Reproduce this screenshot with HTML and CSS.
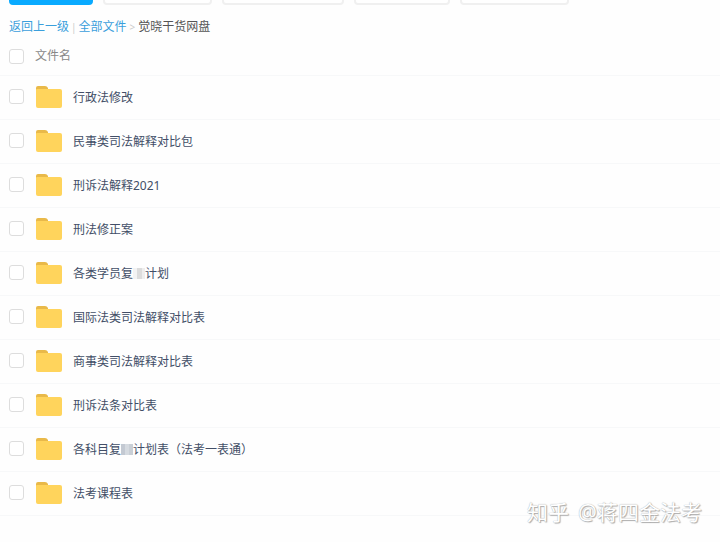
FILE: index.html
```html
<!DOCTYPE html>
<html lang="zh-CN">

<head>
    <meta charset="UTF-8">
    <meta name="viewport" content="width=device-width, initial-scale=1.0">
    <title>觉晓干货网盘</title>
    <link rel="stylesheet" href="styles.css">
</head>

<body>
    <svg class="sprite" aria-hidden="true">
        <symbol id="folder" viewBox="0 0 26 22">
            <path fill="#e9b949" d="M0 10V2Q0 0 2 0H9Q11 0 12 2V10Z" />
            <path fill="#ffd45c" d="M0 4Q0 3 1 3H24Q26 3 26 5V20Q26 22 24 22H2Q0 22 0 20Z" />
        </symbol>
    </svg>

    <div class="toolbar">
        <button class="btn btn-upload" type="button" aria-label="上传"></button>
        <button class="btn btn-folder" type="button" aria-label="新建文件夹"></button>
        <button class="btn btn-offline" type="button" aria-label="离线下载"></button>
        <button class="btn btn-device" type="button" aria-label="设备"></button>
        <button class="btn btn-share" type="button" aria-label="分享"></button>
    </div>

    <nav class="breadcrumb">
        <a href="#">返回上一级</a>
        <span class="bar">|</span>
        <a href="#">全部文件</a>
        <span class="arrow">&gt;</span>
        <span>觉晓干货网盘</span>
    </nav>

    <main>
        <table class="files">
            <thead>
                <tr>
                    <th class="check"><input type="checkbox" aria-label="全选"></th>
                    <th>文件名</th>
                </tr>
            </thead>
            <tbody>
                <tr>
                    <td class="check"><input type="checkbox" id="f1"></td>
                    <td><label class="name" for="f1"><svg class="icon"><use href="#folder" /></svg><span>行政法修改</span></label></td>
                </tr>
                <tr>
                    <td class="check"><input type="checkbox" id="f2"></td>
                    <td><label class="name" for="f2"><svg class="icon"><use href="#folder" /></svg><span>民事类司法解释对比包</span></label></td>
                </tr>
                <tr>
                    <td class="check"><input type="checkbox" id="f3"></td>
                    <td><label class="name" for="f3"><svg class="icon"><use href="#folder" /></svg><span>刑诉法解释2021</span></label></td>
                </tr>
                <tr>
                    <td class="check"><input type="checkbox" id="f4"></td>
                    <td><label class="name" for="f4"><svg class="icon"><use href="#folder" /></svg><span>刑法修正案</span></label></td>
                </tr>
                <tr>
                    <td class="check"><input type="checkbox" id="f5"></td>
                    <td><label class="name" for="f5"><svg class="icon"><use href="#folder" /></svg><span>各类学员复<i class="mask mask-light"></i>计划</span></label></td>
                </tr>
                <tr>
                    <td class="check"><input type="checkbox" id="f6"></td>
                    <td><label class="name" for="f6"><svg class="icon"><use href="#folder" /></svg><span>国际法类司法解释对比表</span></label></td>
                </tr>
                <tr>
                    <td class="check"><input type="checkbox" id="f7"></td>
                    <td><label class="name" for="f7"><svg class="icon"><use href="#folder" /></svg><span>商事类司法解释对比表</span></label></td>
                </tr>
                <tr>
                    <td class="check"><input type="checkbox" id="f8"></td>
                    <td><label class="name" for="f8"><svg class="icon"><use href="#folder" /></svg><span>刑诉法条对比表</span></label></td>
                </tr>
                <tr>
                    <td class="check"><input type="checkbox" id="f9"></td>
                    <td><label class="name" for="f9"><svg class="icon"><use href="#folder" /></svg><span>各科目复<i class="mask"></i>计划表（法考一表通）</span></label></td>
                </tr>
                <tr>
                    <td class="check"><input type="checkbox" id="f10"></td>
                    <td><label class="name" for="f10"><svg class="icon"><use href="#folder" /></svg><span>法考课程表</span></label></td>
                </tr>
            </tbody>
        </table>
    </main>

    <div class="watermark"><span>知乎</span><span>@蒋四金法考</span></div>
</body>

</html>
```
FILE: styles.css
```css
* {
    box-sizing: border-box;
}

body {
    position: relative;
    margin: 0;
    min-height: 100vh;
    background-color: #fefefe;
    color: #424e67;
    font-family: "Noto Sans", "Noto Sans CJK SC", sans-serif;
    font-size: 12px;
    line-height: 20px;
}

.sprite {
    display: none;
}

/* only the lower edge of the buttons shows */
.toolbar {
    display: flex;
    align-items: flex-end;
    gap: 10px;
    height: 5px;
    padding: 0 9px;
    overflow: hidden;
}

.btn {
    flex: none;
    height: 28px;
    padding: 0;
    border: 2px solid #f0f0f0;
    border-radius: 4px;
    background-color: white;
    cursor: pointer;
}

.btn-upload {
    width: 84px;
    border-color: #09aaff;
    background-color: #09aaff;
}

.btn-folder,
.btn-share {
    width: 109px;
}

.btn-offline {
    width: 122px;
}

.btn-device {
    width: 96px;
}

.breadcrumb {
    display: flex;
    gap: 3px;
    padding: 12px 9px 1px;
    color: #555555;
}

.breadcrumb a {
    color: #3b9fdc;
    text-decoration: none;
}

.bar,
.arrow {
    color: #cccccc;
    font-size: 10px;
}

.bar {
    margin: 0 -1px;
}

.files {
    width: 100%;
    border-collapse: collapse;
}

.files th {
    height: 37px;
    padding: 0;
    color: #888888;
    font-weight: normal;
    text-align: left;
}

.files td {
    height: 44px;
    padding: 0;
}

.files tr {
    border-bottom: 1px solid #f7f8f9;
}

.files .check {
    width: 35px;
    padding-left: 9px;
}

.files td.check {
    padding-bottom: 2px;
}

input[type="checkbox"] {
    appearance: none;
    display: block;
    width: 15px;
    height: 15px;
    margin: 0;
    border: 1px solid #dddddd;
    border-radius: 3px;
    background-color: white;
}

input[type="checkbox"]:checked {
    border-color: #09aaff;
    background-color: #09aaff;
}

.name {
    display: flex;
    align-items: center;
    gap: 11px;
    padding-left: 1px;
}

.name span {
    padding-top: 2px;
}

.icon {
    width: 26px;
    height: 22px;
}

/* mosaic over a hidden character */
.mask {
    display: inline-block;
    width: 12px;
    height: 11px;
    vertical-align: -1px;
    background: linear-gradient(90deg, #c3c9d2 33%, #d5dae0 33%, #d5dae0 66%, #c9cfd6 66%);
}

.mask-light {
    background: linear-gradient(90deg, #f3f3f3 33%, #dcdcdc 33%, #dcdcdc 75%, #eeeeee 75%);
}

.watermark {
    position: absolute;
    right: 18px;
    bottom: 14px;
    display: flex;
    gap: 9px;
    color: white;
    font-size: 21px;
    line-height: 32px;
    text-shadow: 1px 1px 1px #aaaaaa, 0 0 1px #999999;
}
```
